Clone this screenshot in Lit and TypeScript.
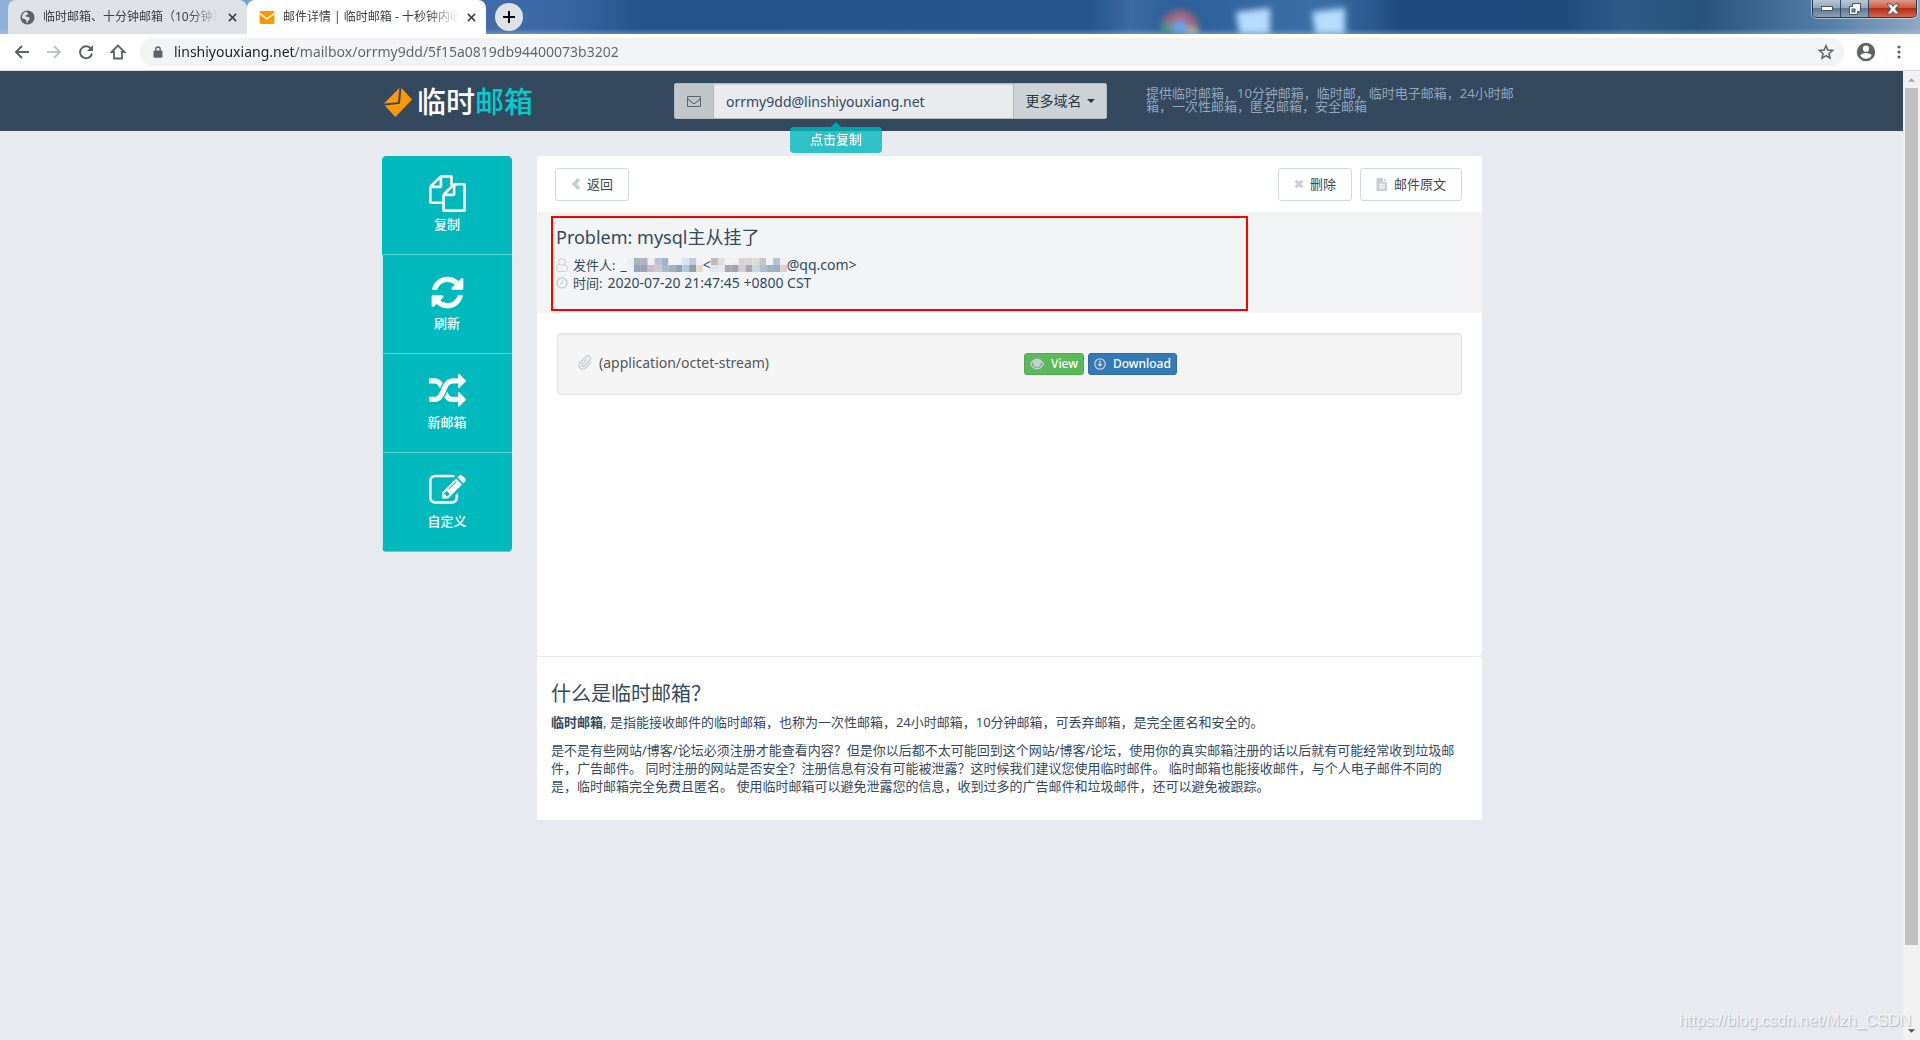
import { LitElement, html, css, svg } from "lit";
import { customElement, property } from "lit/decorators.js";

const ICONS: Record<string, { box: string; body: unknown }> = {
  copy: {
    box: "0 0 1792 1792",
    body: svg`<path d="M1696 384q40 0 68 28t28 68v1216q0 40-28 68t-68 28h-960q-40 0-68-28t-28-68v-288h-544q-40 0-68-28t-28-68v-672q0-40 20-88t48-76l408-408q28-28 76-48t88-20h416q40 0 68 28t28 68v328q68-40 128-40h416zm-544 213l-299 299h299v-299zm-640-384l-299 299h299v-299zm196 647l316-316v-416h-384v416q0 40-28 68t-68 28h-416v640h512v-256q0-40 20-88t48-76zm956 804v-1152h-384v416q0 40-28 68t-68 28h-416v640h896z"/>`,
  },
  refresh: {
    box: "0 0 1792 1792",
    body: svg`<path d="M1639 1056q0 5-1 7-64 268-268 434.5t-478 166.5q-146 0-282.5-55t-243.5-157l-129 129q-19 19-45 19t-45-19-19-45v-448q0-26 19-45t45-19h448q26 0 45 19t19 45-19 45l-137 137q71 66 161 102t187 36q134 0 250-65t186-179q11-17 53-117 8-23 30-23h192q13 0 22.5 9.5t9.5 22.5zm25-800v448q0 26-19 45t-45 19h-448q-26 0-45-19t-19-45 19-45l138-138q-148-137-349-137-134 0-250 65t-186 179q-11 17-53 117-8 23-30 23h-199q-13 0-22.5-9.5t-9.5-22.5v-7q65-268 270-434.5t480-166.5q146 0 284 55.5t245 156.5l130-129q19-19 45-19t45 19 19 45z"/>`,
  },
  random: {
    box: "0 0 1792 1792",
    body: svg`<path d="M666 481q-60 92-137 273-22-45-37-72.5t-40.5-63.5-51-56.5-63-35-81.5-14.5h-224q-14 0-23-9t-9-23v-192q0-14 9-23t23-9h224q250 0 410 225zm1126 799q0 14-9 23l-320 320q-9 9-23 9-13 0-22.5-9.5t-9.5-22.5v-192q-32 0-85 .5t-81 1-73-1-71-5-64-10.5-63-18.5-58-28.5-59-40-55-53.5-56-69.5q59-93 136-273 22 45 37 72.5t40.5 63.5 51 56.5 63 35 81.5 14.5h256v-192q0-14 9-23t23-9q12 0 24 10l319 319q9 9 9 23zm0-896q0 14-9 23l-320 320q-9 9-23 9-13 0-22.5-9.5t-9.5-22.5v-192h-256q-48 0-87 15t-69 45-51 61.5-45 77.5q-32 62-78 171-29 66-49.5 111t-54 105-64 100-74 83-90 68.5-106.5 42-128 16.5h-224q-14 0-23-9t-9-23v-192q0-14 9-23t23-9h224q48 0 87-15t69-45 51-61.5 45-77.5q32-62 78-171 29-66 49.5-111t54-105 64-100 74-83 90-68.5 106.5-42 128-16.5h256v-192q0-14 9-23t23-9q12 0 24 10l319 319q9 9 9 23z"/>`,
  },
  edit: {
    box: "0 0 1792 1792",
    body: svg`<path d="M888 1184l116-116-152-152-116 116v56h96v96h56zm440-720q-16-16-33 1l-350 350q-17 17-1 33t33-1l350-350q17-17 1-33zm80 594v190q0 119-84.5 203.5t-203.5 84.5h-832q-119 0-203.5-84.5t-84.5-203.5v-832q0-119 84.5-203.5t203.5-84.5h832q63 0 117 25 15 7 18 23 3 17-9 29l-49 49q-14 14-32 8-23-6-45-6h-832q-66 0-113 47t-47 113v832q0 66 47 113t113 47h832q66 0 113-47t47-113v-126q0-13 9-22l64-64q15-15 35-7t20 29zm-96-738l288 288-672 672h-288v-288zm444 132l-92 92-288-288 92-92q28-28 68-28t68 28l152 152q28 28 28 68t-28 68z"/>`,
  },
  envelope: {
    box: "0 0 1792 1792",
    body: svg`<path d="M1664 1504v-768q-32 36-69 66-268 206-426 338-51 43-83 67t-86.5 48.5-102.5 24.5h-2q-48 0-102.5-24.5t-86.5-48.5-83-67q-158-132-426-338-37-30-69-66v768q0 13 9.5 22.5t22.5 9.5h1472q13 0 22.5-9.5t9.5-22.5zm0-1051v-24.5l-.5-13-3-12.5-5.5-9-9-7.5-14-2.5h-1472q-13 0-22.5 9.5t-9.5 22.5q0 168 147 284 193 152 401 317 6 5 35 29.5t46 37.5 44.5 31.5 50.5 27.5 43 9h2q20 0 43-9t50.5-27.5 44.5-31.5 46-37.5 35-29.5q208-165 401-317 54-43 100.5-115.5t46.5-131.5zm128-37v1088q0 66-47 113t-113 47h-1472q-66 0-113-47t-47-113v-1088q0-66 47-113t113-47h1472q66 0 113 47t47 113z"/>`,
  },
  chevron: {
    box: "0 0 10 12",
    body: svg`<path d="M6.500 0 9.200 2.600 5.800 6l3.400 3.400L6.500 12 .6 6z" />`,
  },
  times: {
    box: "0 0 12 12",
    body: svg`<path d="M3.300.800 6 3.500 8.700.800l2.500 2.500L8.500 6l2.700 2.700-2.500 2.500L6 8.500l-2.700 2.700L.8 8.700 3.500 6 .8 3.300z" />`,
  },
  file: {
    box: "0 0 12 14",
    body: svg`<path fill-rule="evenodd" d="M.8 0H7v4.2h4.4v9.1a.7.7 0 0 1-.7.7H.8a.7.7 0 0 1-.7-.7V.7A.7.7 0 0 1 .8 0zM3 6.3v1h6v-1zm0 2v1h6v-1zm0 2v1h6v-1z"/><path d="M8 .1 11.3 3.3H8z"/>`,
  },
  user: {
    box: "0 0 12 14",
    body: svg`<g fill="none" stroke="currentColor" stroke-width="1"><circle cx="6" cy="4" r="3.4"/><path d="M3.2 6.2C1.2 6.8.6 9 .6 11.2c0 1.4.8 2.2 2 2.2h6.8c1.2 0 2-.8 2-2.2 0-2.200-.6-4.400-2.600-5"/></g>`,
  },
  clock: {
    box: "0 0 12 12",
    body: svg`<g fill="none" stroke="currentColor"><circle cx="6" cy="6" r="5" stroke-width="1.500"/><path d="M6.500 3v3.500H4" stroke-width="1"/></g>`,
  },
  clip: {
    box: "0 0 16 16",
    body: svg`<g transform="rotate(45 8 8)" fill="none" stroke="currentColor" stroke-width="1.400" stroke-linecap="round"><path d="M11.800 4v7.200a3.800 3.800 0 0 1-7.600 0V2.800a2.600 2.600 0 0 1 5.200 0v8a1.400 1.400 0 0 1-2.800 0V4"/></g>`,
  },
  eye: {
    box: "0 0 14 12",
    body: svg`<path fill-rule="evenodd" d="M7 .600c3 0 5.600 2.200 7 5.400-1.400 3.200-4 5.400-7 5.400S1.400 9.200 0 6C1.400 2.800 4 .600 7 .600zM3.200 4A7 7 0 0 0 1.400 6c1.400 2.600 3.400 4 5.600 4s4.200-1.400 5.600-4a7 7 0 0 0-1.800-2 4 4 0 1 1-7.600 0z"/><circle cx="7" cy="5" r="2.800"/>`,
  },
  download: {
    box: "0 0 12 12",
    body: svg`<circle cx="6" cy="6" r="5.200" fill="none" stroke="currentColor" stroke-width="1.300"/><path d="M5.200 2.800h1.600V6h2L6 9 3.200 6h2z"/>`,
  },
  back: {
    box: "0 0 16 16",
    body: svg`<path d="M15 8H2M8 2 2 8l6 6" fill="none" stroke="currentColor" stroke-width="2"/>`,
  },
  forward: {
    box: "0 0 16 16",
    body: svg`<path d="M1 8h13M8 2l6 6-6 6" fill="none" stroke="currentColor" stroke-width="2"/>`,
  },
  reload: {
    box: "0 0 16 16",
    body: svg`<path d="M13 4.800A6 6 0 1 0 14 9.500" fill="none" stroke="currentColor" stroke-width="2"/><path d="M15 1v6H9z"/>`,
  },
  home: {
    box: "0 0 16 16",
    body: svg`<path d="M8 1.500 1.500 8H4v6.500h8V8h2.500z" fill="none" stroke="currentColor" stroke-width="1.800"/>`,
  },
  lock: {
    box: "0 0 10 12",
    body: svg`<rect x=".5" y="4.500" width="9" height="7.300" rx="1"/><path d="M2.800 5V3.200a2.200 2.200 0 0 1 4.400 0V5" fill="none" stroke="currentColor" stroke-width="1.300"/>`,
  },
  star: {
    box: "0 0 16 16",
    body: svg`<path d="m8 1.800 1.800 4.300 4.700.4-3.600 3 1.100 4.600L8 11.700l-4 2.400 1.100-4.600-3.600-3 4.700-.4z" fill="none" stroke="currentColor" stroke-width="1.500"/>`,
  },
  account: {
    box: "0 0 20 20",
    body: svg`<path fill-rule="evenodd" d="M10 .8a9.200 9.200 0 1 0 0 18.400A9.200 9.200 0 0 0 10 .8zm0 2.800a3 3 0 1 1 0 6.200 3 3 0 0 1 0-6.200zm0 13.200a6.700 6.700 0 0 1-5.600-3c0-1.800 3.700-2.800 5.600-2.800s5.600 1 5.600 2.800a6.700 6.700 0 0 1-5.600 3z"/>`,
  },
  dots: {
    box: "0 0 4 14",
    body: svg`<circle cx="2" cy="2" r="1.600"/><circle cx="2" cy="7" r="1.600"/><circle cx="2" cy="12" r="1.600"/>`,
  },
  close: {
    box: "0 0 10 10",
    body: svg`<path d="m1 1 8 8M9 1 1 9" stroke="currentColor" stroke-width="1.700"/>`,
  },
  plus: {
    box: "0 0 12 12",
    body: svg`<path d="M6 0v12M0 6h12" stroke="currentColor" stroke-width="2"/>`,
  },
  globe: {
    box: "0 0 16 16",
    body: svg`<circle cx="8" cy="8" r="7.500"/><path d="M6 1.800c1.800.5 3 1.400 2.400 2.600-.6 1-2.400.8-2.600 2 0 1 2.200.6 3.800 1.400 1.600.9.800 2.400-.400 3.200-.8.600-.6 2-1.600 3-.8-.6-.6-2-1-3C6 9.500 3.400 9.400 2 8.400c-.1-3 1.400-5.600 4-6.600z" fill="#dee1e6"/>`,
  },
  mail: {
    box: "0 0 16 14",
    body: svg`<rect width="16" height="14" rx="1.500" fill="#ff9800"/><path d="m0 2.500 8 6 8-6" fill="none" stroke="#fff" stroke-width="1.500"/>`,
  },
  logo: {
    box: "0 0 28 29",
    body: svg`<path fill="#ff9800" d="M15.400 0 0 15.600l14-1.400z"/><path fill="#ff9800" d="m17.400 0 10.600 11.600L11.400 29 .8 17.400l15.200-1.600z"/>`,
  },
  caret: {
    box: "0 0 8 4",
    body: svg`<path d="M0 0h8L4 4z"/>`,
  },
  up: {
    box: "0 0 8 4",
    body: svg`<path d="M0 4h8L4 0z"/>`,
  },
};

@customElement("ui-icon")
export class UiIcon extends LitElement {
  @property() name = "copy";
  @property({ type: Number }) w = 16;
  @property({ type: Number }) h = 16;
  static styles = css`
    :host { display: inline-flex; flex: none; }
    svg { display: block; fill: currentColor; }
  `;
  render() {
    const icon = ICONS[this.name];
    return html`<svg width=${this.w} height=${this.h} viewBox=${icon.box} aria-hidden="true">${icon.body}</svg>`;
  }
}

@customElement("browser-bar")
export class BrowserBar extends LitElement {
  static styles = css`
    :host { display: block; font-family: "Noto Sans", "Noto Sans CJK SC", sans-serif; }
    * { box-sizing: border-box; }
    button { border: 0; padding: 0; margin: 0; background: none; color: inherit; display: inline-flex; align-items: center; justify-content: center; }
    .strip {
      position: relative; display: flex; align-items: flex-start; height: 34px; padding-left: 8px; overflow: hidden;
      background:
        linear-gradient(180deg, transparent 84%, rgba(190, 215, 245, 0.35)),
        linear-gradient(90deg, #8fb0da 0, #7b9fd0 240px, #3f6ca8 490px, #3a68a4 560px, #22548b 640px, #24558d 1090px, #3b6ba0 1130px, #2d5f98 1180px, #386ba3 1270px, #3a6fa5 1330px, #1e4b7f 1400px, #1d4b7c 1560px, #2c5a87 1620px, #26527d 1700px, #5480a8 1830px, #8fa8c2 1920px);
    }
    .deco { position: absolute; left: 1152px; top: 0; width: 210px; height: 34px; filter: blur(3px); }
    .tab { display: flex; align-items: center; height: 34px; width: 239px; padding: 0 10px 0 12px; border-radius: 8px 8px 0 0; background: #dee1e6; color: #3c4043; font-size: 12px; line-height: 18px; z-index: 1; }
    .tab.active { background: #fff; }
    .title { flex: 1; margin: 0 3px 0 8px; overflow: hidden; white-space: nowrap; -webkit-mask-image: linear-gradient(90deg, #000 80%, transparent 97%); mask-image: linear-gradient(90deg, #000 80%, transparent 97%); }
    .fav { color: #5f6368; }
    .new { width: 28px; height: 28px; margin: 3px 0 0 9px; border-radius: 50%; background: #dee1e6; z-index: 1; }
    .win { position: absolute; right: 3px; top: 0; display: flex; height: 18px; border: 1px solid #26384d; border-top: 0; border-radius: 0 0 5px 5px; box-shadow: 0 0 0 1px rgba(255, 255, 255, 0.5); overflow: hidden; color: #fff; }
    .win button { width: 28px; border-right: 1px solid #32475f; background: linear-gradient(180deg, #b9c6d4 0, #94a8bd 45%, #5f7893 50%, #8ba1b8 100%); }
    .win button.x { width: 47px; border: 0; background: linear-gradient(180deg, #dd9c8c 0, #cc5b44 45%, #b42d14 50%, #d2684c 100%); }
    .tools { display: flex; align-items: center; height: 36px; padding: 0 19px 0 14px; background: #fff; color: #5f6368; }
    .nav { display: flex; gap: 16px; margin-right: 14px; }
    .nav .off { color: #bdc1c6; }
    .omni { flex: 1; display: flex; align-items: center; height: 28px; margin-right: 12px; padding: 0 10px 0 13px; border-radius: 14px; background: #f1f3f4; }
    .omni input { flex: 1; min-width: 0; margin-left: 11px; padding: 0; border: 0; outline: 0; font: 14px/20px "Noto Sans", "Noto Sans CJK SC", sans-serif; color: transparent; background: linear-gradient(90deg, #202124 121px, #5f6368 121px); -webkit-background-clip: text; background-clip: text; }
    .menu { margin-left: 21px; }
    .rule { height: 1px; background: #d5d8dc; }
  `;
  render() {
    return html`
      <div class="strip">
        <svg class="deco" viewBox="0 0 210 34" aria-hidden="true">
          <circle cx="28" cy="28" r="18" fill="#a4667c" />
          <path d="M28 28 10 22v20h18z" fill="#4f9a86" />
          <path d="M28 28h18v14H28z" fill="#c5c99a" />
          <circle cx="28" cy="28" r="8" fill="#6fa3ec" />
          <path d="M84 12 118 8v30H88z" fill="#b6dcff" />
          <path d="M160 12 193 8v30H164z" fill="#b6dcff" />
        </svg>
        <div class="tab">
          <ui-icon class="fav" name="globe" w="15" h="15"></ui-icon>
          <span class="title">临时邮箱、十分钟邮箱（10分钟）</span>
          <button aria-label="关闭"><ui-icon name="close" w="9" h="9"></ui-icon></button>
        </div>
        <div class="tab active">
          <ui-icon name="mail" w="16" h="13"></ui-icon>
          <span class="title">邮件详情 | 临时邮箱 - 十秒钟内收</span>
          <button aria-label="关闭"><ui-icon name="close" w="9" h="9"></ui-icon></button>
        </div>
        <button class="new" aria-label="新标签页"><ui-icon name="plus" w="12" h="12"></ui-icon></button>
        <div class="win">
          <button aria-label="最小化"><svg width="12" height="5"><rect x=".5" y=".5" width="11" height="4" fill="#fff" stroke="#4b5663" /></svg></button>
          <button aria-label="还原"><svg width="13" height="12"><path d="M4.500.500h8v8h-3v3h-8v-8h3z" fill="#fff" stroke="#4b5663" /><rect x="4" y="6" width="3" height="3" fill="#7d90a5" stroke="#4b5663" /></svg></button>
          <button class="x" aria-label="关闭"><svg width="14" height="12" viewBox="0 0 14 12"><path d="m1 1h4l2 2.500L9 1h4L9.500 6l3.500 5H9L7 8.500 5 11H1l3.500-5z" fill="#fff" stroke="#4b5663" /></svg></button>
        </div>
      </div>
      <div class="tools">
        <div class="nav">
          <button aria-label="后退"><ui-icon name="back"></ui-icon></button>
          <button class="off" aria-label="前进"><ui-icon name="forward"></ui-icon></button>
          <button aria-label="刷新"><ui-icon name="reload"></ui-icon></button>
          <button aria-label="主页"><ui-icon name="home"></ui-icon></button>
        </div>
        <div class="omni">
          <ui-icon name="lock" w="10" h="12"></ui-icon>
          <input aria-label="地址" value="linshiyouxiang.net/mailbox/orrmy9dd/5f15a0819db94400073b3202" />
          <button aria-label="收藏"><ui-icon name="star"></ui-icon></button>
        </div>
        <button aria-label="用户"><ui-icon name="account" w="20" h="20"></ui-icon></button>
        <button class="menu" aria-label="菜单"><ui-icon name="dots" w="4" h="14"></ui-icon></button>
      </div>
      <div class="rule"></div>
    `;
  }
}

@customElement("site-header")
export class SiteHeader extends LitElement {
  static styles = css`
    :host { display: block; background: #34495e; }
    * { box-sizing: border-box; }
    .inner { display: grid; grid-template-columns: 292px 433px minmax(0, 1fr); align-items: center; max-width: 1171px; height: 60px; margin: 0 auto; padding: 0 16px; }
    .logo { display: flex; align-items: center; gap: 5px; padding: 2px 0 0 2px; color: #fff; font-size: 29px; font-weight: 500; line-height: 36px; text-decoration: none; white-space: nowrap; }
    .logo em { font-style: normal; color: #0cc; }
    .group { position: relative; display: flex; height: 36px; border: 1px solid #b4b9bd; border-radius: 2px; }
    .addon { display: flex; align-items: center; justify-content: center; width: 39px; background: #c1c6ca; color: #5a6570; border-right: 1px solid #b4b9bd; }
    input { flex: 1; min-width: 0; border: 0; outline: 0; padding: 1px 12px 0; background: #e9ebef; box-shadow: inset 0 1px 1px rgba(0, 0, 0, 0.1); color: #34495e; font: 14px/20px "Noto Sans", "Noto Sans CJK SC", sans-serif; }
    .more { display: flex; align-items: center; justify-content: center; gap: 5px; width: 93px; border: 0; border-left: 1px solid #b4b9bd; padding: 0; background: #cdd2d6; color: #2c3642; font: 14px/20px "Noto Sans", "Noto Sans CJK SC", sans-serif; }
    .tip { position: absolute; left: 115px; top: 43px; width: 92px; height: 26px; border-radius: 4px; background: #00b9bc; opacity: 0.8; color: #fff; font-size: 13px; font-weight: 500; line-height: 24px; text-align: center; z-index: 2; }
    .tip::before { content: ""; position: absolute; left: 41px; top: -5px; border: 5px solid transparent; border-top: 0; border-bottom-color: #00b9bc; }
    .desc { margin: 0 0 2px 39px; color: #93a6bd; font-size: 13px; line-height: 13px; }
  `;
  render() {
    return html`
      <div class="inner">
        <a class="logo" href="#"><ui-icon name="logo" w="28" h="29"></ui-icon><span>临时<em>邮箱</em></span></a>
        <div class="group">
          <label class="addon" for="mail" aria-label="邮箱地址"><ui-icon name="envelope" w="14" h="14"></ui-icon></label>
          <input id="mail" value="orrmy9dd@linshiyouxiang.net" readonly />
          <button class="more">更多域名<ui-icon name="caret" w="8" h="4"></ui-icon></button>
          <span class="tip">点击复制</span>
        </div>
        <p class="desc">提供临时邮箱，10分钟邮箱，临时邮，临时电子邮箱，24小时邮箱，一次性邮箱，匿名邮箱，安全邮箱</p>
      </div>
    `;
  }
}

const NAV = [
  { icon: "copy", label: "复制" },
  { icon: "refresh", label: "刷新" },
  { icon: "random", label: "新邮箱" },
  { icon: "edit", label: "自定义" },
];

@customElement("side-nav")
export class SideNav extends LitElement {
  static styles = css`
    :host { display: flex; flex-direction: column; border-radius: 5px; overflow: hidden; background: #00b9bc; }
    button { display: flex; flex-direction: column; align-items: center; gap: 3px; height: 99px; padding: 19px 1px 0 0; border: 0; border-bottom: 1px solid #59d0d2; border-left: 1px solid #c4ecee; background: #00b9bc; color: #fff; font: 500 13px/18px "Noto Sans", "Noto Sans CJK SC", sans-serif; }
    button:first-child { border-left-color: #00b9bc; }
  `;
  render() {
    return NAV.map(
      (n) => html`<button><ui-icon name=${n.icon} w="37" h="37"></ui-icon><span>${n.label}</span></button>`,
    );
  }
}

const MASK_A = ["#e6eef0", "#a9b3c0", "#b5b3bd", "#efeff2", "#b9c3d4", "#a3b2c8", "#f2f3f5", "#eff1f5", "#d5e4f2", "#c0cad9", "#f0f1f4"];
const MASK_B = ["#eef0f3", "#93a5b8", "#9da2b2", "#c9bfcb", "#d6c4cc", "#adb9cb", "#9eb0c8", "#8fa3bc", "#aecbe6", "#9d9ca0", "#e2dccd"];
const MASK_C = ["#c3b7b4", "#e4dcdc", "#f1f2f5", "#f0f0f4", "#d9d4d3", "#dad6d3", "#d8dfd6", "#c3c4c9", "#f2f3f5", "#b6c0d6", "#eff1f4"];
const MASK_D = ["#dbe8f3", "#e8e6ef", "#a9a7b4", "#a3a2b0", "#d2cdcf", "#aaa6b0", "#c4d6e8", "#a9bfd6", "#9fb3b9", "#9bacc6", "#e0cfcb"];

@customElement("mail-view")
export class MailView extends LitElement {
  static styles = css`
    :host { display: block; min-width: 0; color: #34495e; }
    * { box-sizing: border-box; }
    .panel { min-height: 500px; background: #fff; border-radius: 4px; }
    .actions { display: flex; gap: 8px; padding: 12px 20px 11px 18px; }
    .btn { display: inline-flex; align-items: center; justify-content: center; gap: 6px; height: 33px; padding: 0 15px 1px; border: 1px solid #d3d9df; border-radius: 3px; background: #fff; color: #444; font: 13px/18px "Noto Sans", "Noto Sans CJK SC", sans-serif; }
    .btn:first-child { margin-right: auto; }
    .btn ui-icon, .meta ui-icon, .well ui-icon { color: #c8ced5; }
    .head { padding: 4px 14px 2px; background: #f2f4f6; }
    .mark { max-width: 697px; height: 95px; padding: 7px 3px; border: 2px solid #f00; }
    h1 { margin: 0 0 7px; font-size: 18px; font-weight: 400; line-height: 24px; }
    .meta { display: flex; align-items: center; gap: 5px; height: 18px; font-size: 13px; line-height: 18px; white-space: pre; }
    .meta span { display: inline-flex; align-items: center; }
    .meta .value { font-size: 14px; }
    .meta svg { display: block; }
    .well { display: grid; grid-template-columns: 447px 1fr; align-items: start; height: 62px; margin: 20px 20px 0; padding: 19px; border: 1px solid #e3e3e3; border-radius: 4px; background: #f5f5f5; box-shadow: inset 0 1px 1px rgba(0, 0, 0, 0.05); color: #555; }
    .name { display: flex; align-items: center; gap: 6px; font-size: 14px; line-height: 20px; }
    .links { display: flex; gap: 4px; }
    .tag { display: inline-flex; align-items: center; gap: 7px; height: 22px; padding: 0 5px; border: 1px solid #4cae4c; border-radius: 3px; background: #5cb85c; color: #fff; font-size: 12px; font-weight: 500; line-height: 18px; text-decoration: none; }
    .tag.blue { background: #337ab7; border-color: #2e6da4; }
    .about { margin-top: 1px; padding: 25px 20px 25px 14px; background: #fff; }
    h2 { margin: 0 0 7px; font-size: 20px; font-weight: 400; line-height: 24px; }
    .about p { margin: 0 0 10px; font-size: 13px; line-height: 18px; }
    .about p:last-child { margin: 0; }
  `;
  private mask(top: string[], bottom: string[]) {
    return html`<svg width="76" height="14" viewBox="0 0 77 14" preserveAspectRatio="none" aria-hidden="true">
      ${top.map((c, i) => svg`<rect x=${i * 7} y="0" width="7" height="7" fill=${c}/>`)}
      ${bottom.map((c, i) => svg`<rect x=${i * 7} y="7" width="7" height="7" fill=${c}/>`)}
    </svg>`;
  }
  render() {
    return html`
      <section class="panel">
        <div class="actions">
          <button class="btn"><ui-icon name="chevron" w="10" h="12"></ui-icon>返回</button>
          <button class="btn"><ui-icon name="times" w="10" h="10"></ui-icon>删除</button>
          <button class="btn"><ui-icon name="file" w="12" h="13"></ui-icon>邮件原文</button>
        </div>
        <div class="head">
          <div class="mark">
            <h1>Problem: mysql主从挂了</h1>
            <div class="meta"><ui-icon name="user" w="12" h="14"></ui-icon><span>发件人:</span><span class="value">_${this.mask(MASK_A, MASK_B)}&lt;${this.mask(MASK_C, MASK_D)}@qq.com&gt;</span></div>
            <div class="meta"><ui-icon name="clock" w="12" h="12"></ui-icon><span>时间:</span><span class="value">2020-07-20 21:47:45 +0800 CST</span></div>
          </div>
        </div>
        <div class="well">
          <div class="name"><ui-icon name="clip" w="16" h="16"></ui-icon>(application/octet-stream)</div>
          <div class="links">
            <a class="tag" href="#"><ui-icon name="eye" w="14" h="12"></ui-icon>View</a>
            <a class="tag blue" href="#"><ui-icon name="download" w="12" h="12"></ui-icon>Download</a>
          </div>
        </div>
      </section>
      <section class="about">
        <h2>什么是临时邮箱？</h2>
        <p><b>临时邮箱</b>, 是指能接收邮件的临时邮箱，也称为一次性邮箱，24小时邮箱，10分钟邮箱，可丢弃邮箱，是完全匿名和安全的。</p>
        <p>是不是有些网站/博客/论坛必须注册才能查看内容？但是你以后都不太可能回到这个网站/博客/论坛，使用你的真实邮箱注册的话以后就有可能经常收到垃圾邮件，广告邮件。 同时注册的网站是否安全？注册信息有没有可能被泄露？这时候我们建议您使用临时邮件。 临时邮箱也能接收邮件，与个人电子邮件不同的是，临时邮箱完全免费且匿名。 使用临时邮箱可以避免泄露您的信息，收到过多的广告邮件和垃圾邮件，还可以避免被跟踪。</p>
      </section>
    `;
  }
}

@customElement("app-root")
export class AppRoot extends LitElement {
  static styles = css`
    :host { position: relative; display: flex; flex-direction: column; min-height: 100vh; overflow: hidden; font-family: "Noto Sans", "Noto Sans CJK SC", sans-serif; }
    * { box-sizing: border-box; }
    .view { flex: 1; display: flex; }
    .page { flex: 1; min-width: 0; background: #e7eaef; }
    .cols { display: grid; grid-template-columns: 130px minmax(0, 945px); align-items: start; gap: 25px; max-width: 1171px; margin: 25px auto 0; padding: 0 16px; }
    .bar { display: flex; flex-direction: column; align-items: center; width: 17px; padding: 7px 0; background: #f1f1f1; color: #505050; }
    .bar .up { color: #a3a3a3; }
    .rail { flex: 1; display: grid; grid-template-rows: 11fr 1fr; margin: 6px 0; }
    .thumb { width: 13px; background: #c1c1c1; }
    .stamp { position: absolute; right: 9px; bottom: 8px; color: rgba(255, 255, 255, 0.75); font: 16px/22px "Liberation Sans", sans-serif; text-shadow: 1px 1px 1px rgba(120, 130, 140, 0.5); }
  `;
  render() {
    return html`
      <browser-bar></browser-bar>
      <div class="view">
        <div class="page">
          <site-header></site-header>
          <main class="cols">
            <side-nav></side-nav>
            <mail-view></mail-view>
          </main>
        </div>
        <div class="bar">
          <ui-icon class="up" name="up" w="7" h="4"></ui-icon>
          <div class="rail"><div class="thumb"></div></div>
          <ui-icon name="caret" w="7" h="4"></ui-icon>
        </div>
      </div>
      <div class="stamp">https://blog.csdn.net/Mzh_CSDN</div>
    `;
  }
}
